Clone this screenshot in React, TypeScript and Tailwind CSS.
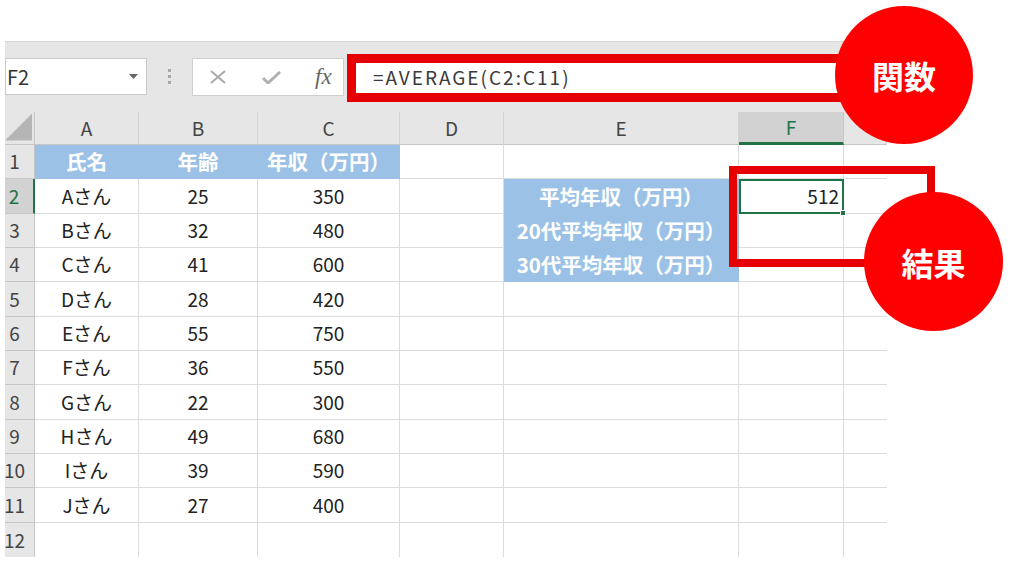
import type { ReactElement, ReactNode } from 'react';

type Col = { key: string; width: string };

const cols: Col[] = [
  { key: 'A', width: 'w-[104px]' },
  { key: 'B', width: 'w-[119px]' },
  { key: 'C', width: 'w-[142px]' },
  { key: 'D', width: 'w-[104px]' },
  { key: 'E', width: 'w-[235px]' },
  { key: 'F', width: 'w-[105px]' },
  { key: 'G', width: 'w-[43px]' },
];

const people: string[][] = [
  ['Aさん', '25', '350'],
  ['Bさん', '32', '480'],
  ['Cさん', '41', '600'],
  ['Dさん', '28', '420'],
  ['Eさん', '55', '750'],
  ['Fさん', '36', '550'],
  ['Gさん', '22', '300'],
  ['Hさん', '49', '680'],
  ['Iさん', '39', '590'],
  ['Jさん', '27', '400'],
];

const labels: Record<number, string> = {
  2: '平均年収（万円）',
  3: '20代平均年収（万円）',
  4: '30代平均年収（万円）',
};

function cellContent(row: number, col: string): { text: ReactNode; blue: boolean } {
  if (row === 1) {
    if (col === 'A') return { text: '氏名', blue: true };
    if (col === 'B') return { text: '年齢', blue: true };
    if (col === 'C') return { text: '年収（万円）', blue: true };
  }
  if (row >= 2 && row <= 11) {
    const p = people[row - 2];
    if (col === 'A') return { text: p[0], blue: false };
    if (col === 'B') return { text: p[1], blue: false };
    if (col === 'C') return { text: p[2], blue: false };
  }
  if (col === 'E' && labels[row]) return { text: labels[row], blue: true };
  return { text: null, blue: false };
}

function Toolbar(): ReactElement {
  return (
    <div className="flex h-[71px] items-start border-t border-[#d6d6d6] bg-[#e6e6e6] pt-[16px]">
      <div className="flex h-[37px] w-[142px] shrink-0 items-center justify-between border border-[#c9c9c9] bg-white pr-[8px] text-[20px] text-[#333]">
        <span className="pl-[1px]">F2</span>
        <svg width="9" height="5" viewBox="0 0 9 5">
          <path d="M0 0h9L4.5 5z" fill="#666" />
        </svg>
      </div>
      <div className="flex h-[37px] w-[45px] shrink-0 flex-col items-center justify-center gap-[3px] pr-[1px]">
        <span className="h-[3px] w-[3px] bg-[#a8a8a8]" />
        <span className="h-[3px] w-[3px] bg-[#a8a8a8]" />
        <span className="h-[3px] w-[3px] bg-[#a8a8a8]" />
      </div>
      <div className="flex h-[38px] w-[152px] shrink-0 items-center border border-[#d0d0d0] bg-white">
        <svg className="ml-[17px]" width="16" height="14" viewBox="0 0 16 14">
          <path d="M1 1l14 12M15 1L1 13" stroke="#a9a9a9" strokeWidth="2" />
        </svg>
        <svg className="ml-[36px]" width="19" height="13" viewBox="0 0 19 13">
          <path d="M1 7l5 5L18 1" stroke="#b0b0b0" strokeWidth="3" fill="none" />
        </svg>
        <span className="ml-[34px] font-['Liberation_Serif',serif] text-[23px] italic text-[#666]">fx</span>
      </div>
      <div className="ml-[3px] flex h-[38px] flex-1 items-center bg-white pl-[26px] text-[19px] tracking-[2px] text-[#3a3a3a]">
        =AVERAGE(C2:C11)
      </div>
    </div>
  );
}

function HeaderRow(): ReactElement {
  return (
    <div className="flex h-[33px] bg-[#e6e6e6]">
      <div className="flex w-[30px] shrink-0 items-end justify-end border-r border-b border-[#c6c6c6] pb-[3px] pr-[2px]">
        <svg width="28" height="28" viewBox="0 0 28 28">
          <path d="M28 0V28H0z" fill="#b5b5b5" />
        </svg>
      </div>
      {cols.map((c) =>
        c.key === 'F' ? (
          <div
            key={c.key}
            className={`${c.width} flex shrink-0 items-center justify-center border-r border-b-[3px] border-r-[#c6c6c6] border-b-[#217346] bg-[#d2d2d2] text-[19px] text-[#217346]`}
          >
            {c.key}
          </div>
        ) : (
          <div
            key={c.key}
            className={`${c.width} flex shrink-0 items-center justify-center border-r border-b border-[#d4d4d4] border-b-[#c6c6c6] text-[19px] text-[#444]`}
          >
            {c.key === 'G' ? null : c.key}
          </div>
        ),
      )}
    </div>
  );
}

function GridRow({ row }: { row: number }): ReactElement {
  const selected = row === 2;
  const last = row === 12;
  return (
    <div className="flex h-[34.33px]">
      <div
        className={
          selected
            ? 'flex w-[30px] shrink-0 items-center justify-center border-r-2 border-b border-r-[#217346] border-b-[#c6c6c6] bg-[#d2d2d2] pr-[10px] text-[19px] text-[#217346]'
            : `flex w-[30px] shrink-0 items-center justify-center border-r border-[#c6c6c6] bg-[#e6e6e6] pr-[10px] text-[19px] text-[#444] ${last ? '' : 'border-b'}`
        }
      >
        {row}
      </div>
      {cols.map((c) => {
        const { text, blue } = cellContent(row, c.key);
        if (c.key === 'F' && row === 2) {
          return (
            <div
              key={c.key}
              className={`${c.width} relative flex shrink-0 items-center justify-end border-2 border-[#217346] pr-[3px] text-[19px] text-[#222]`}
            >
              512
              <span className="absolute -right-[4px] -bottom-[4px] h-[6px] w-[6px] border border-white bg-[#217346]" />
            </div>
          );
        }
        if (blue) {
          return (
            <div
              key={c.key}
              className={`${c.width} flex shrink-0 items-center justify-center whitespace-nowrap border-r border-b border-[#9bc2e6] bg-[#9bc2e6] text-[20.5px] font-bold text-white`}
            >
              {text}
            </div>
          );
        }
        return (
          <div
            key={c.key}
            className={`${c.width} flex shrink-0 items-center justify-center border-[#dcdcdc] text-[19px] text-[#222] ${
              c.key === 'G' ? '' : 'border-r'
            } ${last ? '' : 'border-b'}`}
          >
            {text}
          </div>
        );
      })}
    </div>
  );
}

export default function App(): ReactElement {
  const rows = Array.from({ length: 12 }, (_, i) => i + 1);
  return (
    <div className="relative h-[571px] w-[1024px] overflow-hidden bg-white pt-[41px] pl-[5px] font-['Noto_Sans_CJK_JP','Noto_Sans',sans-serif]">
      <div className="w-[882px]">
        <Toolbar />
        <HeaderRow />
        {rows.map((r) => (
          <GridRow key={r} row={r} />
        ))}
      </div>

      {/* annotations */}
      <div className="absolute top-[54px] left-[347px] h-[48px] w-[553px] border-[9px] border-[#e60000]" />
      <div className="absolute top-[6px] left-[835px] flex h-[138px] w-[138px] items-center justify-center rounded-full bg-[#ff0000] text-[32px] font-bold text-white">
        関数
      </div>
      <div className="absolute top-[166px] left-[729px] h-[101px] w-[206px] border-[8px] border-[#e60000]" />
      <div className="absolute top-[192px] left-[864px] flex h-[139px] w-[139px] items-center justify-center rounded-full bg-[#ff0000] text-[32px] font-bold text-white">
        結果
      </div>
    </div>
  );
}
